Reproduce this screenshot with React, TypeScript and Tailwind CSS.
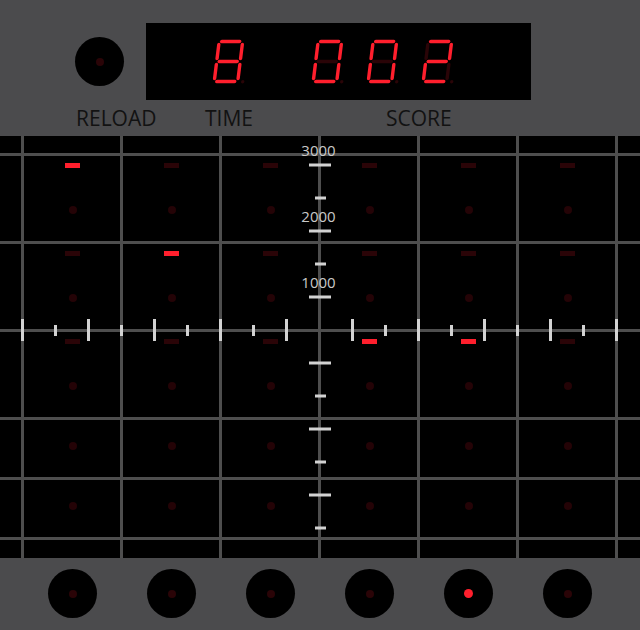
const RED = "#ff1f2d";
const DIM = "#2a0407";

type Seg = "a" | "b" | "c" | "d" | "e" | "f" | "g";

// segment endpoints in an upright 28x44 box; the group gets slanted afterwards
const SEGMENTS: Record<Seg, [number, number, number, number]> = {
  a: [4.5, 2, 22.5, 2],
  b: [25.5, 5, 25.5, 19],
  c: [25.5, 25, 25.5, 39],
  d: [4.5, 42, 22.5, 42],
  e: [2, 25, 2, 39],
  f: [2, 5, 2, 19],
  g: [4.5, 22, 22.5, 22],
};

const DIGITS: Record<string, Seg[]> = {
  "0": ["a", "b", "c", "d", "e", "f"],
  "2": ["a", "b", "g", "e", "d"],
  "8": ["a", "b", "c", "d", "e", "f", "g"],
};

function Digit({ value }: { value: string }) {
  const lit = DIGITS[value] ?? [];
  return (
    <svg width="34" height="48" viewBox="0 0 34 48" className="shrink-0">
      <g transform="translate(1 1.5) translate(0 44) skewX(-7) translate(0 -44)">
        {(Object.keys(SEGMENTS) as Seg[]).map((s) => {
          const [x1, y1, x2, y2] = SEGMENTS[s];
          return (
            <line
              key={s}
              x1={x1}
              y1={y1}
              x2={x2}
              y2={y2}
              stroke={lit.includes(s) ? RED : DIM}
              strokeWidth={3.4}
              strokeLinecap="round"
            />
          );
        })}
        <circle cx={30.5} cy={42.3} r={1.7} fill={DIM} />
      </g>
    </svg>
  );
}

const time = "8";
const score = "002";

// row-col of the targets that are up
const upTargets = new Set(["1-1", "2-2", "3-4", "3-5"]);
const rowKinds = ["edge", "full", "full", "full", "low", "low", "edge"];

function Cell({ row, col }: { row: number; col: number }) {
  const kind = rowKinds[row];
  if (kind === "edge" || col === 0 || col === 7) return <div className="bg-black" />;
  if (kind === "low") {
    return (
      <div className="bg-black flex justify-center pt-[22px] pl-px">
        <div className="w-2 h-2 rounded-full bg-[#240306]" />
      </div>
    );
  }
  const up = upTargets.has(`${row}-${col}`);
  return (
    <div className="bg-black flex flex-col items-center pt-[7px] pl-px">
      <div className={up ? "w-[15px] h-[5px] bg-[#ff1f2d]" : "w-[15px] h-[5px] bg-[#2a0407]"} />
      <div className="mt-[38px] w-2 h-2 rounded-full bg-[#240306]" />
    </div>
  );
}

function Scale() {
  const ticks = [];
  for (let k = 0; k <= 18; k++) {
    if (k === 9) continue;
    const tall = k % 2 === 0;
    ticks.push(
      <rect key={`h${k}`} x={21 + 33 * k} y={tall ? 183 : 189} width={3} height={tall ? 22 : 11} />
    );
  }
  for (let j = 1; j <= 6; j++) {
    for (const sign of [-1, 1]) {
      const cy = 194 + sign * 33 * j;
      if (cy < 0) continue;
      const long = j % 2 === 1;
      ticks.push(
        <rect key={`v${j}${sign}`} x={long ? 309 : 315} y={cy - 1.5} width={long ? 22 : 11} height={3} />
      );
    }
  }
  return (
    <svg className="absolute inset-0 pointer-events-none" width="640" height="422" viewBox="0 0 640 422">
      <g fill="#d2d2d2">{ticks}</g>
      <g fill="#c9c9c9" fontFamily="'Open Sans', sans-serif" fontSize="15" textAnchor="middle">
        <text x={318.5} y={20}>3000</text>
        <text x={318.5} y={86}>2000</text>
        <text x={318.5} y={152}>1000</text>
      </g>
    </svg>
  );
}

export default function App() {
  return (
    <main className="w-[640px] h-[630px] overflow-hidden bg-black font-['Open_Sans',sans-serif]">
      {/* control panel */}
      <div className="h-[136px] bg-[#4b4b4d]">
        <div className="flex pt-[23px]">
          <div className="ml-[75px] mt-[14px] w-[49px] h-[49px] rounded-full bg-black flex items-center justify-center">
            <div className="w-2 h-2 rounded-full bg-[#2a0407]" />
          </div>
          <div className="ml-[22px] w-[385px] h-[77px] bg-black flex items-start pt-[15px] pl-[65px]">
            {time.split("").map((d, i) => (
              <Digit key={`t${i}`} value={d} />
            ))}
            <div className="ml-[65px] flex gap-[21px]">
              {score.split("").map((d, i) => (
                <Digit key={`s${i}`} value={d} />
              ))}
            </div>
          </div>
        </div>
        <div className="flex mt-[8px] pl-[76px] text-[21px] leading-none text-[#121212]">
          <span className="w-[129px]">RELOAD</span>
          <span className="w-[181px]">TIME</span>
          <span>SCORE</span>
        </div>
      </div>

      {/* range */}
      <div className="relative h-[422px]">
        <div className="grid h-full grid-cols-[21px_repeat(6,96px)_1fr] grid-rows-[17px_repeat(3,85px)_repeat(2,57px)_1fr] gap-[3px] bg-[#4e4e4e]">
          {rowKinds.map((_, r) =>
            Array.from({ length: 8 }, (_, c) => <Cell key={`${r}-${c}`} row={r} col={c} />)
          )}
        </div>
        <Scale />
      </div>

      {/* trigger buttons */}
      <div className="h-[72px] bg-[#4b4b4d] flex pl-[48px] pt-[11px] gap-[50px]">
        {Array.from({ length: 6 }, (_, i) => (
          <div key={i} className="w-[49px] h-[49px] rounded-full bg-black flex items-center justify-center">
            <div className={i === 4 ? "w-[9px] h-[9px] rounded-full bg-[#ff1f2d]" : "w-2 h-2 rounded-full bg-[#2a0407]"} />
          </div>
        ))}
      </div>
    </main>
  );
}
